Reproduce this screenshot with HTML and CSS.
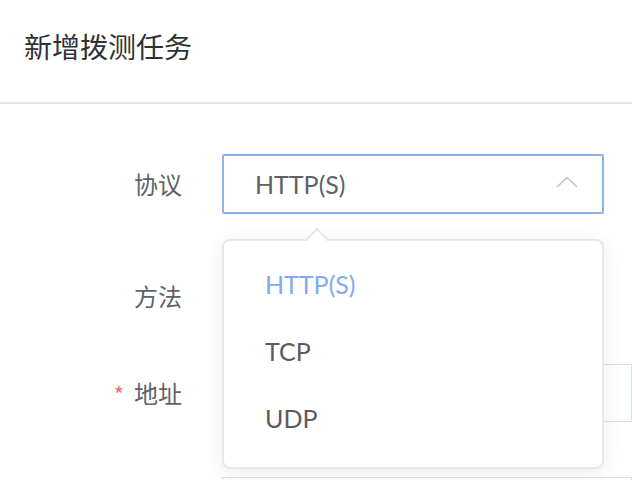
FILE: index.html
```html
<!DOCTYPE html>
<html lang="zh">
<head>
<meta charset="utf-8">
<link rel="stylesheet" href="styles.css">
</head>
<body>
<div class="page">
  <header class="header">
    <h1 class="title">新增拨测任务</h1>
  </header>
  <form class="form">
    <div class="row row-protocol">
      <label class="label">协议</label>
      <div class="select is-focus">
        <span class="select-value">HTTP(S)</span>
        <svg class="chevron" width="22" height="12" viewBox="0 0 22 12"><path d="M1 11 L11 1.5 L21 11" fill="none" stroke="#c0c4cc" stroke-width="1.6"/></svg>
      </div>
    </div>
    <div class="row row-method">
      <label class="label">方法</label>
      <div class="field"></div>
    </div>
    <div class="row row-address">
      <label class="label"><span class="required">*</span>地址</label>
      <div class="input wide"></div>
    </div>
    <div class="row row-next">
      <div class="label"></div>
      <div class="input wide"></div>
    </div>
  </form>
  <div class="dropdown">
    <div class="dropdown-arrow"></div>
    <ul class="options">
      <li class="option selected">HTTP(S)</li>
      <li class="option">TCP</li>
      <li class="option">UDP</li>
    </ul>
  </div>
</div>
</body>
</html>
```

FILE: styles.css
```css
* { box-sizing: border-box; }
html, body { margin: 0; padding: 0; background: #fff; }
body {
  width: 632px;
  height: 480px;
  overflow: hidden;
  font-family: "Lato", "Noto Sans CJK SC", sans-serif;
}
.page { position: relative; width: 632px; height: 480px; overflow: hidden; }
.header {
  height: 104px;
  border-bottom: 2px solid #e4e4e4;
  padding: 0 24px;
  display: flex;
  align-items: flex-start;
}
.title {
  margin: 0;
  padding-top: 26px;
  font-family: "Noto Sans CJK SC", sans-serif;
  font-weight: 400;
  font-size: 28px;
  line-height: 40px;
  color: #303133;
}
.form {
  display: flex;
  flex-direction: column;
  padding-top: 50px;
  height: 376px;
  overflow: hidden;
}
.row { display: flex; align-items: center; gap: 40px; flex: none; }
.label {
  width: 182px;
  flex: none;
  text-align: right;
  font-family: "Noto Sans CJK SC", sans-serif;
  font-size: 24px;
  color: #5f6369;
  line-height: 30px;
}
.required { color: #f56c6c; margin-right: 10px; font-size: 22px; }
.select {
  width: 382px;
  height: 60px;
  border: 2px solid #dcdfe6;
  border-radius: 2px;
  display: flex;
  align-items: center;
  justify-content: space-between;
  padding: 0 24px 0 31px;
}
.select.is-focus { border-color: #8db2ea; }
.select-value { font-size: 25px; color: #606266; }
.chevron { display: block; margin-top: -4px; }
.field { width: 382px; height: 60px; }
.row-method { margin-top: 52px; }
.row-address { margin-top: 38px; }
.input {
  height: 58px;
  border: 1px solid #dcdfe6;
}
.input.wide { width: 440px; }
.row-next { margin-top: 55px; }
.dropdown {
  position: absolute;
  left: 222px;
  top: 239px;
  width: 382px;
  height: 230px;
  background: #fff;
  border: 2px solid #e6e8ee;
  border-radius: 8px;
  box-shadow: 0 4px 20px rgba(0, 0, 0, 0.08);
}
.dropdown-arrow {
  position: absolute;
  left: 85px;
  top: -10px;
  width: 16px;
  height: 16px;
  background: #fff;
  border-top: 2px solid #e6e8ee;
  border-left: 2px solid #e6e8ee;
  transform: rotate(45deg);
}
.options { list-style: none; margin: 0; padding: 9px 0 12px; }
.option {
  height: 67px;
  display: flex;
  align-items: center;
  padding-left: 41px;
  font-size: 25px;
  color: #5a5b5e;
}
.option.selected { color: #82aaee; }
```
